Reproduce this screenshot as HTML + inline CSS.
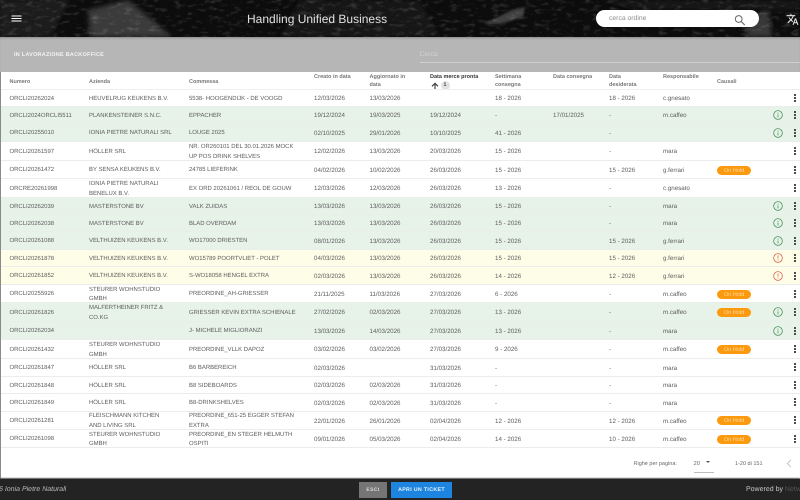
<!DOCTYPE html>
<html lang="it"><head><meta charset="utf-8"><title>Handling Unified Business</title>
<style>
html,body{margin:0;padding:0;width:800px;height:500px;overflow:hidden;background:#fff}
body{position:relative;font-family:"Liberation Sans",sans-serif;color:#5a5a5a;text-rendering:geometricPrecision}
.abs,.r,.c{position:absolute}
#hdr{left:0;top:0;width:800px;height:37px;background:#0a0a0a;overflow:hidden}
#band{left:0;top:37px;width:800px;height:35px;background:#b6b6b6;box-shadow:inset 0 2px 2px -1px #8a8a8a}
#wrap{left:0;top:72px;width:800px;height:407px;background:#fff;border-left:1px solid #8a8a8a;box-sizing:border-box;overflow:hidden}
.r{left:0;width:800px;border-bottom:1px solid #eaeeea;box-sizing:border-box;font-size:6.200px;line-height:9.300px;color:#5e5e5e}
.g{background:#e7f2e9}.y{background:#fefde7}
.c{top:0;height:100%;display:flex;align-items:center;white-space:nowrap;box-sizing:border-box;padding-top:2px}
.a{left:9.500px;font-size:5.950px;padding-top:3px}.b{left:89px;font-size:5.950px;padding-top:3px}.d{left:189px;font-size:5.950px;padding-top:3px}.e{left:314px}.f{left:369.500px}.h{left:430px}.i{left:495px}.j{left:553px}.k{left:609px}.l{left:663px}
.hold{position:absolute;left:717px;top:50%;margin-top:-4px;width:34px;height:9px;border-radius:5px;background:#fb9a0e;color:#ffd9a0;font-size:5.600px;line-height:10px;text-align:center}
.dots{position:absolute;left:794px;top:50%;margin-top:-4px;width:2px;height:2px;background:#4a4a4a;box-shadow:0 3px 0 #4a4a4a,0 6px 0 #4a4a4a}
.inf{position:absolute;left:772.500px;top:50%;margin-top:-5px;width:10px;height:10px}
.th{position:absolute;font-size:5.500px;line-height:8.400px;font-weight:bold;color:#777;white-space:nowrap}
.soft{filter:blur(.2px)}
</style></head><body>

<svg width="0" height="0" style="position:absolute">
<defs>
<symbol id="ig" viewBox="0 0 9 9"><circle cx="4.500" cy="4.500" r="3.900" fill="none" stroke="#48925a" stroke-width=".7"/><path d="M4.500 4v2.600M4.500 2.400v.9" stroke="#48925a" stroke-width=".7"/></symbol>
<symbol id="ir" viewBox="0 0 9 9"><circle cx="4.500" cy="4.500" r="3.900" fill="none" stroke="#d9644c" stroke-width=".7"/><path d="M4.500 2.300v2.700M4.500 5.800v.9" stroke="#d9644c" stroke-width=".7"/></symbol>
</defs>
</svg>

<div id="hdr" class="abs">
<svg width="800" height="37" style="position:absolute;left:0;top:0">
<defs>
<filter id="n" x="0" y="0" width="100%" height="100%"><feTurbulence type="fractalNoise" baseFrequency="0.12 0.25" numOctaves="3" seed="11"/><feColorMatrix values="0 0 0 0 1 0 0 0 0 1 0 0 0 0 1 2.400 0 0 0 -1.250"/></filter>
<filter id="s" x="-20%" y="-20%" width="140%" height="140%"><feGaussianBlur stdDeviation="2.500"/></filter>
<filter id="s2" x="-20%" y="-20%" width="140%" height="140%"><feGaussianBlur stdDeviation="1"/></filter>
</defs>
<rect width="800" height="37" fill="#0c0c0c"/>
<path d="M88 10L128 0L145 14L172 37H90Z" fill="#3a3a3a" filter="url(#s)"/>
<path d="M0 0H70L50 37H0Z" fill="#1c1c1c" filter="url(#s)"/>
<path d="M300 0H420L440 37H280Z" fill="#161616" filter="url(#s)"/>
<path d="M484 24L512 10L525 7L523 17L500 24Z" fill="#404040" filter="url(#s2)"/>
<path d="M745 37L752 18L768 8L772 37Z" fill="#383838" filter="url(#s)"/>
<path d="M600 0H800V10H640Z" fill="#181818" filter="url(#s)"/>
<rect width="800" height="37" filter="url(#n)" opacity=".17"/>
</svg>
<svg width="12" height="8" style="position:absolute;left:10.500px;top:15px"><path d="M.5 1H10.500M.5 3.500H10.500M.5 6H10.500" stroke="#fff" stroke-width="1"/></svg>
<div class="abs" style="left:247px;top:10.500px;font-size:12px;line-height:16px;color:#e0e0e0;white-space:nowrap">Handling Unified Business</div>
<div class="abs" style="left:596px;top:10px;width:163px;height:17px;border-radius:9px;background:#fff"></div>
<div class="abs" style="left:609px;top:14px;font-size:6.800px;line-height:9px;color:#8f8f8f;white-space:nowrap">cerca ordine</div>
<svg width="12" height="12" viewBox="0 0 12 12" style="position:absolute;left:734px;top:14px"><circle cx="4.700" cy="5" r="3.400" fill="none" stroke="#666" stroke-width="1"/><path d="M7.200 7.500L10.700 11" stroke="#666" stroke-width="1.200"/></svg>
<svg width="13" height="13" viewBox="0 0 24 24" style="position:absolute;left:786px;top:12.500px"><path fill="#e8e8e8" d="M12.870 15.070l-2.540-2.510.03-.03c1.740-1.940 2.980-4.170 3.710-6.530H17V4h-7V2H8v2H1v1.990h11.170C11.500 7.920 10.440 9.750 9 11.350 8.070 10.320 7.300 9.190 6.690 8h-2c.73 1.630 1.730 3.170 2.980 4.560l-5.090 5.020L4 19l5-5 3.110 3.110.76-2.040zM18.500 10h-2L12 22h2l1.120-3h4.750L21 22h2l-4.500-12zm-2.620 7l1.620-4.330L19.120 17h-3.240z"/></svg>
</div>

<div id="band" class="abs">
<div class="abs soft" style="left:14px;top:14px;font-size:5.400px;line-height:8px;font-weight:bold;color:#f4f4f4;letter-spacing:.3px;white-space:nowrap">IN LAVORAZIONE BACKOFFICE</div>
<div class="abs" style="left:419.500px;top:13px;font-size:6.800px;line-height:9px;color:#d2d2d2;white-space:nowrap">Cerca</div>
<div class="abs" style="left:420px;top:24.500px;width:380px;height:1px;background:#cfcfcf"></div>
</div>

<div id="wrap" class="abs">
<div class="soft">
<div class="th" style="left:8.500px;top:5.500px;line-height:9px">Numero</div>
<div class="th" style="left:88px;top:5.500px;line-height:9px">Azienda</div>
<div class="th" style="left:188px;top:5.500px;line-height:9px">Commessa</div>
<div class="th" style="left:313px;top:1px">Creato in data</div>
<div class="th" style="left:368.500px;top:1px">Aggiornato in<br>data</div>
<div class="th" style="left:429px;top:1px;color:#333">Data merce pronta</div>
<div class="th" style="left:494px;top:1px">Settimana<br>consegna</div>
<div class="th" style="left:552px;top:1px">Data consegna</div>
<div class="th" style="left:608px;top:1px">Data<br>desiderata</div>
<div class="th" style="left:662px;top:1px">Responsabile</div>
<div class="th" style="left:716px;top:5.500px;line-height:9px">Causali</div>
<svg width="8" height="8" viewBox="0 0 8 8" style="position:absolute;left:430px;top:9.500px"><path d="M4 7.500V1.500M1 4.300L4 1.300L7 4.300" fill="none" stroke="#444" stroke-width="1.200"/></svg>
<div class="abs" style="left:439.500px;top:8.500px;width:9px;height:9px;border-radius:5px;background:#e2e2e2;color:#444;font-size:5.300px;font-weight:bold;line-height:9.500px;text-align:center">1</div>
</div>
<div class="abs" style="left:0;top:17px;width:800px;height:1px;background:#efefef"></div>
</div>

<div class="abs" style="left:1px;top:90px;width:799px;height:389px;overflow:hidden">
<div class="soft" style="position:absolute;left:-1px;top:-90px;width:800px;height:500px">

<div class="r" style="top:90px;height:17px"><span class="c a">ORCLI20262024</span><span class="c b">HEUVELRUG KEUKENS B.V.</span><span class="c d">5538- HOOGENDIJK - DE VOOGD</span><span class="c e">12/03/2026</span><span class="c f">13/03/2026</span><span class="c i">18 - 2026</span><span class="c k">18 - 2026</span><span class="c l">c.gnesato</span><i class="dots"></i></div>

<div class="r g" style="top:107px;height:17px"><span class="c a">ORCLI2024ORCLI5511</span><span class="c b">PLANKENSTEINER S.N.C.</span><span class="c d">EPPACHER</span><span class="c e">19/12/2024</span><span class="c f">19/03/2025</span><span class="c h">19/12/2024</span><span class="c i">-</span><span class="c j">17/01/2025</span><span class="c k">-</span><span class="c l">m.caffeo</span><svg class="inf"><use href="#ig"/></svg><i class="dots"></i></div>

<div class="r g" style="top:124px;height:18px"><span class="c a">ORCLI20255010</span><span class="c b">IONIA PIETRE NATURALI SRL</span><span class="c d">LOUGE 2025</span><span class="c e">02/10/2025</span><span class="c f">29/01/2026</span><span class="c h">10/10/2025</span><span class="c i">41 - 2026</span><span class="c k">-</span><svg class="inf"><use href="#ig"/></svg><i class="dots"></i></div>

<div class="r" style="top:142px;height:19px"><span class="c a">ORCLI20261597</span><span class="c b">HÖLLER SRL</span><span class="c d">NR. OR260101 DEL 30.01.2026 MOCK<br>UP POS DRINK SHELVES</span><span class="c e">12/02/2026</span><span class="c f">13/03/2026</span><span class="c h">20/03/2026</span><span class="c i">15 - 2026</span><span class="c k">-</span><span class="c l">mara</span><i class="dots"></i></div>

<div class="r" style="top:161px;height:18px"><span class="c a">ORCLI20261472</span><span class="c b">BY SENSA KEUKENS B.V.</span><span class="c d">24785 LIEFERINK</span><span class="c e">04/02/2026</span><span class="c f">10/02/2026</span><span class="c h">26/03/2026</span><span class="c i">15 - 2026</span><span class="c k">15 - 2026</span><span class="c l">g.ferrari</span><span class="hold">On Hold</span><i class="dots"></i></div>

<div class="r" style="top:179px;height:19px"><span class="c a">ORCRE20261998</span><span class="c b">IONIA PIETRE NATURALI<br>BENELUX B.V.</span><span class="c d">EX ORD 20261061 / REOL DE GOUW</span><span class="c e">12/03/2026</span><span class="c f">12/03/2026</span><span class="c h">26/03/2026</span><span class="c i">13 - 2026</span><span class="c k">-</span><span class="c l">c.gnesato</span><i class="dots"></i></div>

<div class="r g" style="top:198px;height:17px"><span class="c a">ORCLI20262039</span><span class="c b">MASTERSTONE BV</span><span class="c d">VALK ZUIDAS</span><span class="c e">13/03/2026</span><span class="c f">13/03/2026</span><span class="c h">26/03/2026</span><span class="c i">15 - 2026</span><span class="c k">-</span><span class="c l">mara</span><svg class="inf"><use href="#ig"/></svg><i class="dots"></i></div>

<div class="r g" style="top:215px;height:17px"><span class="c a">ORCLI20262038</span><span class="c b">MASTERSTONE BV</span><span class="c d">BLAD OVERDAM</span><span class="c e">13/03/2026</span><span class="c f">13/03/2026</span><span class="c h">26/03/2026</span><span class="c i">15 - 2026</span><span class="c k">-</span><span class="c l">mara</span><svg class="inf"><use href="#ig"/></svg><i class="dots"></i></div>

<div class="r g" style="top:232px;height:18px"><span class="c a">ORCLI20261088</span><span class="c b">VELTHUIZEN KEUKENS B.V.</span><span class="c d">WO17000 DRIESTEN</span><span class="c e">08/01/2026</span><span class="c f">13/03/2026</span><span class="c h">26/03/2026</span><span class="c i">15 - 2026</span><span class="c k">15 - 2026</span><span class="c l">g.ferrari</span><svg class="inf"><use href="#ig"/></svg><i class="dots"></i></div>

<div class="r y" style="top:250px;height:17px"><span class="c a">ORCLI20261878</span><span class="c b">VELTHUIZEN KEUKENS B.V.</span><span class="c d">WO15789 POORTVLIET - POLET</span><span class="c e">04/03/2026</span><span class="c f">13/03/2026</span><span class="c h">26/03/2026</span><span class="c i">15 - 2026</span><span class="c k">15 - 2026</span><span class="c l">g.ferrari</span><svg class="inf"><use href="#ir"/></svg><i class="dots"></i></div>

<div class="r y" style="top:267px;height:18px"><span class="c a">ORCLI20261852</span><span class="c b">VELTHUIZEN KEUKENS B.V.</span><span class="c d">S-WO18058 HENGEL EXTRA</span><span class="c e">02/03/2026</span><span class="c f">13/03/2026</span><span class="c h">26/03/2026</span><span class="c i">14 - 2026</span><span class="c k">12 - 2026</span><span class="c l">g.ferrari</span><svg class="inf"><use href="#ir"/></svg><i class="dots"></i></div>

<div class="r" style="top:285px;height:18px"><span class="c a">ORCLI20255926</span><span class="c b">STEURER WOHNSTUDIO<br>GMBH</span><span class="c d">PREORDINE_AH-GRIESSER</span><span class="c e">21/11/2025</span><span class="c f">11/03/2026</span><span class="c h">27/03/2026</span><span class="c i">6 - 2026</span><span class="c k">-</span><span class="c l">m.caffeo</span><span class="hold">On Hold</span><i class="dots"></i></div>

<div class="r g" style="top:303px;height:19px"><span class="c a">ORCLI20261826</span><span class="c b">MALFERTHEINER FRITZ &amp;<br>CO.KG</span><span class="c d">GRIESSER KEVIN EXTRA SCHIENALE</span><span class="c e">27/02/2026</span><span class="c f">02/03/2026</span><span class="c h">27/03/2026</span><span class="c i">13 - 2026</span><span class="c k">-</span><span class="c l">m.caffeo</span><span class="hold">On Hold</span><svg class="inf"><use href="#ig"/></svg><i class="dots"></i></div>

<div class="r g" style="top:322px;height:18px"><span class="c a">ORCLI20262034</span><span class="c d">J- MICHELE MIGLIORANZI</span><span class="c e">13/03/2026</span><span class="c f">14/03/2026</span><span class="c h">27/03/2026</span><span class="c i">13 - 2026</span><span class="c k">-</span><span class="c l">mara</span><svg class="inf"><use href="#ig"/></svg><i class="dots"></i></div>

<div class="r" style="top:340px;height:19px"><span class="c a">ORCLI20261432</span><span class="c b">STEURER WOHNSTUDIO<br>GMBH</span><span class="c d">PREORDINE_VLLK DAPOZ</span><span class="c e">03/02/2026</span><span class="c f">03/02/2026</span><span class="c h">27/03/2026</span><span class="c i">9 - 2026</span><span class="c k">-</span><span class="c l">m.caffeo</span><span class="hold">On Hold</span><i class="dots"></i></div>

<div class="r" style="top:359px;height:17.500px"><span class="c a">ORCLI20261847</span><span class="c b">HÖLLER SRL</span><span class="c d">B6 BARBEREICH</span><span class="c e">02/03/2026</span><span class="c h">31/03/2026</span><span class="c i">-</span><span class="c k">-</span><span class="c l">mara</span><i class="dots"></i></div>

<div class="r" style="top:376.500px;height:17.500px"><span class="c a">ORCLI20261848</span><span class="c b">HÖLLER SRL</span><span class="c d">B8 SIDEBOARDS</span><span class="c e">02/03/2026</span><span class="c f">02/03/2026</span><span class="c h">31/03/2026</span><span class="c i">-</span><span class="c k">-</span><span class="c l">mara</span><i class="dots"></i></div>

<div class="r" style="top:394px;height:17.500px"><span class="c a">ORCLI20261849</span><span class="c b">HÖLLER SRL</span><span class="c d">B8-DRINKSHELVES</span><span class="c e">02/03/2026</span><span class="c f">02/03/2026</span><span class="c h">31/03/2026</span><span class="c i">-</span><span class="c k">-</span><span class="c l">mara</span><i class="dots"></i></div>

<div class="r" style="top:411.500px;height:18.500px"><span class="c a">ORCLI20261281</span><span class="c b">FLEISCHMANN KITCHEN<br>AND LIVING SRL</span><span class="c d">PREORDINE_651-25 EGGER STEFAN<br>EXTRA</span><span class="c e">22/01/2026</span><span class="c f">26/01/2026</span><span class="c h">02/04/2026</span><span class="c i">12 - 2026</span><span class="c k">12 - 2026</span><span class="c l">m.caffeo</span><span class="hold">On Hold</span><i class="dots"></i></div>

<div class="r" style="top:430px;height:18px"><span class="c a">ORCLI20261098</span><span class="c b">STEURER WOHNSTUDIO<br>GMBH</span><span class="c d">PREORDINE_EN STEGER HELMUTH<br>OSPITI</span><span class="c e">09/01/2026</span><span class="c f">05/03/2026</span><span class="c h">02/04/2026</span><span class="c i">14 - 2026</span><span class="c k">10 - 2026</span><span class="c l">m.caffeo</span><span class="hold">On Hold</span><i class="dots"></i></div>

</div></div>

<div class="abs" style="left:633.500px;top:460px;font-size:5.500px;line-height:8px;color:#666;white-space:nowrap">Righe per pagina:</div>
<div class="abs" style="left:693.500px;top:460px;font-size:5.800px;line-height:8px;color:#666">20</div>
<div class="abs" style="left:706px;top:461px;width:0;height:0;border-left:2.500px solid transparent;border-right:2.500px solid transparent;border-top:2.500px solid #555"></div>
<div class="abs" style="left:693.500px;top:472px;width:20.500px;height:1px;background:#bdbdbd"></div>
<div class="abs" style="left:735px;top:460px;font-size:5.500px;line-height:8px;color:#666;white-space:nowrap">1-20 di 151</div>
<svg width="6" height="9" viewBox="0 0 6 9" style="position:absolute;left:785.500px;top:459px"><path d="M5 .8L1.300 4.500L5 8.200" fill="none" stroke="#c4c4c4" stroke-width="1"/></svg>

<div class="abs" style="left:0;top:479px;width:800px;height:21px;background:#232323;box-shadow:0 -1px 1px #555;overflow:hidden">
<div class="abs" style="left:-1px;top:6px;font-size:7px;line-height:10px;font-style:italic;color:#bdbdbd;white-space:nowrap">6 Ionia Pietre Naturali</div>
<div class="abs" style="left:359px;top:3px;width:28px;height:16px;background:#757575;color:#ddd;font-size:5px;font-weight:bold;letter-spacing:.4px;line-height:17px;text-align:center">ESCI</div>
<div class="abs" style="left:391px;top:3px;width:61px;height:16px;background:#1d85e0;color:#e8f2fc;font-size:5.300px;font-weight:bold;letter-spacing:.32px;line-height:17px;text-align:center;white-space:nowrap">APRI UN TICKET</div>
<div class="abs" style="left:746px;top:6px;font-size:7px;line-height:10px;color:#c8c8c8;white-space:nowrap">Powered by <span style="color:#555">Netw</span></div>
</div>
</body></html>
